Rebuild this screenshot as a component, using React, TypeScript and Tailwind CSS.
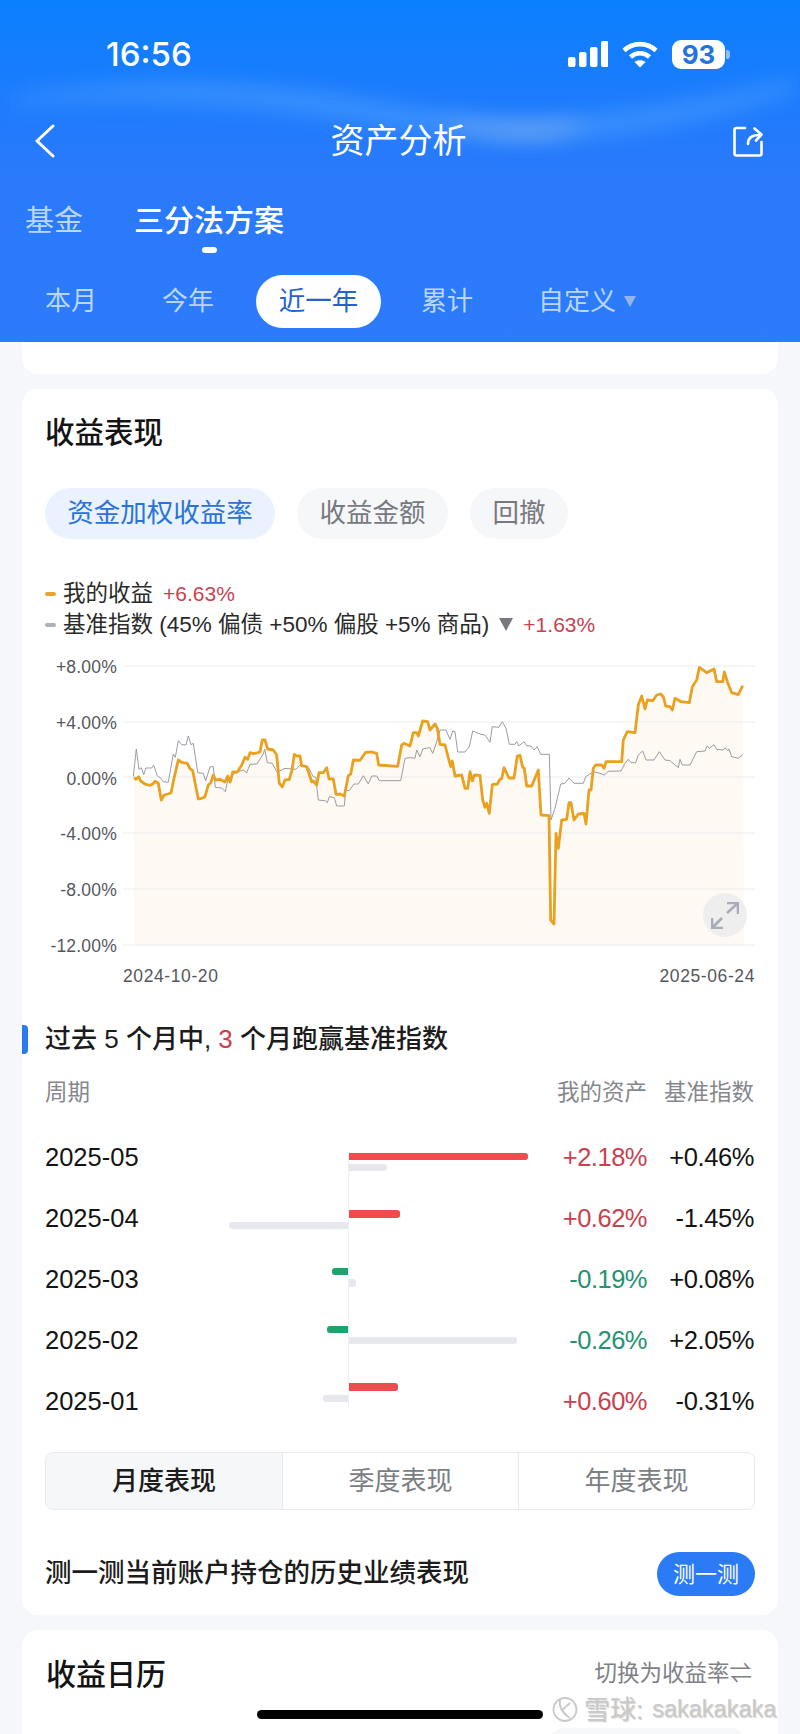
import React from 'react';

// chart points traced in two crops of the picture, turned into chart coordinates below
const orangeA = [[103,382],[108,388],[116,380],[122,393],[135,402],[150,406],[158,402],[165,394],[175,400],[184,450],[192,435],[205,432],[213,428],[222,385],[235,330],[245,337],[262,340],[270,356],[278,362],[295,447],[305,445],[315,440],[325,405],[332,398],[340,375],[347,390],[360,388],[375,396],[383,378],[390,396],[398,366],[412,366],[425,345],[435,322],[443,328],[450,308],[462,311],[480,306],[487,270],[495,270],[503,297],[520,300],[530,315],[538,400],[547,410],[555,390],[568,388],[576,360],[583,313],[590,318],[600,318],[605,347],[620,350],[635,395],[640,393],[650,405],[657,368],[670,368],[680,353],[687,387],[700,387],[708,433],[720,432],[733,438],[745,377],[752,372],[760,330],[780,331],[797,307],[815,306],[830,310],[836,345],[893,349],[905,285],[912,280],[930,288],[940,248],[950,248],[955,258],[968,213],[983,215]];
const orangeB = [[0,240],[15,222],[22,235],[30,283],[45,285],[62,350],[67,333],[75,378],[95,375],[105,415],[113,415],[120,365],[127,393],[133,375],[150,376],[158,450],[165,472],[170,460],[178,490],[187,404],[202,402],[210,388],[215,386],[222,353],[237,384],[252,384],[262,318],[270,316],[278,352],[283,355],[290,408],[305,408],[325,360],[333,495],[357,497],[362,810],[372,822],[378,550],[385,595],[395,510],[410,508],[417,458],[423,458],[432,510],[445,492],[462,490],[468,522],[477,420],[483,420],[490,355],[497,345],[515,345],[522,355],[528,335],[575,335],[580,270],[592,245],[615,248],[625,165],[635,138],[645,177],[652,150],[668,152],[680,135],[692,132],[700,140],[707,168],[720,170],[727,180],[735,145],[745,150],[752,155],[778,158],[787,110],[800,90],[808,52],[830,68],[852,57],[860,95],[878,95],[883,66],[893,98],[905,128],[925,134],[938,107]];
const greyA = [[100,380],[109,297],[117,358],[124,353],[131,374],[138,354],[155,354],[161,346],[172,378],[182,384],[190,395],[205,397],[220,312],[226,322],[235,272],[245,284],[258,285],[265,258],[273,284],[280,280],[293,368],[310,370],[317,393],[330,350],[340,350],[346,412],[365,414],[376,425],[385,382],[392,398],[400,372],[415,365],[430,360],[440,368],[450,343],[470,342],[490,312],[494,298],[502,338],[517,340],[530,365],[540,362],[555,355],[575,357],[588,358],[600,345],[625,352],[640,380],[647,382],[655,450],[675,452],[682,458],[688,440],[703,443],[710,468],[733,468],[737,420],[748,422],[762,402],[775,402],[790,377],[805,402],[815,378],[830,378],[838,392],[902,392],[915,325],[933,323],[945,325],[950,300],[960,320],[968,297],[988,293]];
const greyB = [[0,293],[8,310],[18,282],[30,240],[48,240],[60,268],[68,243],[75,245],[83,306],[105,306],[118,290],[128,243],[150,252],[165,255],[180,277],[187,230],[207,232],[217,215],[228,235],[238,283],[255,283],[260,275],[267,288],[282,275],[290,287],[303,288],[312,300],[322,290],[332,313],[358,313],[363,510],[375,475],[392,402],[405,400],[417,384],[432,400],[460,400],[467,380],[490,365],[510,370],[523,375],[535,364],[573,363],[585,340],[595,328],[603,338],[617,338],[625,315],[638,303],[648,330],[672,330],[688,305],[705,330],[720,332],[745,353],[750,328],[757,345],[780,345],[800,305],[825,303],[832,288],[838,295],[852,284],[860,298],[880,300],[885,293],[893,302],[897,297],[905,320],[925,325],[938,314]];

const toChart = (a: number[][], b: number[][]) =>
  [
    ...a.map(([x, y]) => [100 + x / 3 - 123, 650 + y / 3 - 656]),
    ...b.map(([x, y]) => [430 + x / 3 - 123, 650 + y / 3 - 656]),
  ].map(([x, y]) => `${x.toFixed(1)},${y.toFixed(1)}`);

const orangeLine = toChart(orangeA, orangeB);
const greyLine = toChart(greyA, greyB);

const yLabels = ['+8.00%', '+4.00%', '0.00%', '-4.00%', '-8.00%', '-12.00%'];
const gridY = [10, 66, 121, 177, 233, 289];

const months = [
  { date: '2025-05', mine: 2.18, bench: 0.46 },
  { date: '2025-04', mine: 0.62, bench: -1.45 },
  { date: '2025-03', mine: -0.19, bench: 0.08 },
  { date: '2025-02', mine: -0.26, bench: 2.05 },
  { date: '2025-01', mine: 0.6, bench: -0.31 },
];

const PX_PER_PCT = 82;
const fmt = (v: number) => `${v >= 0 ? '+' : ''}${v.toFixed(2)}%`;

const Bar = ({ value, colour, side }: { value: number; colour: string; side: 'left' | 'right' }) => {
  const show = side === 'left' ? value < 0 : value > 0;
  return (
    <div className={`flex h-[7.3px] ${side === 'left' ? 'justify-end' : 'justify-start'}`}>
      {show && (
        <div
          className={`h-full ${colour} ${side === 'left' ? 'rounded-l-[3px]' : 'rounded-r-[3px]'}`}
          style={{ width: Math.abs(value) * PX_PER_PCT }}
        />
      )}
    </div>
  );
};

const StatusIcons = () => (
  <div className="flex items-center">
    <svg width="40" height="26" viewBox="0 0 40 26" fill="white">
      <rect x="0" y="16" width="7.5" height="10" rx="2" />
      <rect x="11" y="11" width="7.5" height="15" rx="2" />
      <rect x="22" y="6" width="7.5" height="20" rx="2" />
      <rect x="33" y="0" width="7.5" height="26" rx="2" />
    </svg>
    <svg className="ml-[14px]" width="36" height="27" viewBox="0 0 36 27" fill="none" stroke="white" strokeWidth="4.6">
      <path d="M2 9.5C11 1 25 1 34 9.5" />
      <path d="M8.5 16C14 11 22 11 27.5 16" />
      <path d="M18 26.5L12.5 21C15.5 18.5 20.5 18.5 23.5 21Z" fill="white" stroke="none" />
    </svg>
    <div className="ml-[14px] flex items-center">
      <div className="flex h-[29px] w-[53px] items-center justify-center rounded-[9px] bg-white text-[26px] font-bold text-[#2474e0] [font-family:Inter,sans-serif]">
        93
      </div>
      <div className="ml-[1px] h-[9px] w-[4px] rounded-r-[3px] bg-[#8fbdf6]" />
    </div>
  </div>
);

const App = () => {
  return (
    <div className="relative h-[1734px] w-[800px] overflow-hidden bg-[#f5f7fa] [font-family:'Liberation_Sans','Noto_Sans_CJK_SC',sans-serif]">
      {/* blue header */}
      <div className="relative h-[342px] overflow-hidden bg-[linear-gradient(180deg,#0a80ff_0%,#1a7cfd_25%,#2a7afb_50%,#2b7bfb_100%)] text-white">
        <svg className="absolute inset-0" width="800" height="342" viewBox="0 0 800 342" fill="none">
          <defs>
            <filter id="waveBlur" x="-20%" y="-200%" width="140%" height="500%">
              <feGaussianBlur stdDeviation="11" />
            </filter>
          </defs>
          <path d="M10 100C100 80 250 82 350 100C430 113 490 125 540 122C620 118 720 100 795 80L795 90C720 115 620 135 540 138C470 140 400 125 330 114C240 100 110 94 10 105Z" fill="#4fa0ff" opacity="0.8" filter="url(#waveBlur)" />
          <path d="M430 118C470 124 520 130 590 122C560 138 500 142 430 118Z" fill="#c6cfdc" opacity="0.6" filter="url(#waveBlur)" />
        </svg>
        <div className="relative">
          <div className="flex h-[108px] items-center justify-between pl-[106px] pr-[70px]">
            <span className="text-[33px] font-medium leading-none [font-family:Inter,sans-serif]">16:56</span>
            <StatusIcons />
          </div>
          <div className="flex h-[66px] items-center justify-between pl-[34px] pr-[37px]">
            <div className="w-[30px]">
              <svg width="21" height="34" viewBox="0 0 21 34" fill="none" stroke="white" strokeWidth="3" strokeLinecap="round" strokeLinejoin="round">
                <path d="M19 2L3 17L19 32" />
              </svg>
            </div>
            <span className="text-[34px] leading-none">资产分析</span>
            <svg width="30" height="31" viewBox="0 0 30 31" fill="none" stroke="white" strokeWidth="2.6" strokeLinecap="round" strokeLinejoin="round">
              <path d="M12 2H3.5C2.2 2 1.5 2.8 1.5 4V27.5C1.5 28.7 2.2 29.5 3.5 29.5H26.5C27.8 29.5 28.5 28.7 28.5 27.5V16" />
              <path d="M15 18C15 12 18 9 26 9" />
              <path d="M21.5 2.5L28.5 8.5L23 14.5" />
            </svg>
          </div>
          <div className="flex items-start pl-[25px] pt-[24px]">
            <span className="h-[46px] text-[29px] leading-[46px] text-[#b9d6fd]">基金</span>
            <div className="ml-[51px] flex flex-col items-center">
              <span className="h-[46px] text-[30px] font-medium leading-[46px]">三分法方案</span>
              <div className="mt-[3px] h-[6px] w-[15px] rounded-full bg-white" />
            </div>
          </div>
          <div className="mt-[22px] flex h-[53px] items-center pl-[45px] text-[26px] text-[#bad6fd]">
            <span>本月</span>
            <span className="ml-[65px]">今年</span>
            <span className="ml-[42px] flex h-[53px] w-[125px] items-center justify-center rounded-full bg-white text-[26.5px] text-[#2464c8]">近一年</span>
            <span className="ml-[40px]">累计</span>
            <span className="ml-[65px]">自定义</span>
            <span className="ml-[8px] h-0 w-0 border-x-[6px] border-t-[11px] border-x-transparent border-t-[#94b5ec]" />
          </div>
        </div>
      </div>

      <div className="mx-[22px] h-[32px] rounded-b-[16px] bg-white" />

      {/* 收益表现 */}
      <div className="mx-[22px] mt-[15px] rounded-[16px] bg-white px-[23px] pb-[19px] pt-[24px]">
        <h2 className="text-[29.5px] font-medium leading-[40px] text-[#141414]">收益表现</h2>

        <div className="mt-[35px] flex gap-[22px] text-[26.5px]">
          <span className="flex h-[51px] w-[230px] items-center justify-center rounded-full bg-[#e9f2fe] pt-[1px] text-[#2a72d8]">资金加权收益率</span>
          <span className="flex h-[51px] w-[151px] items-center justify-center rounded-full bg-[#f6f7f9] pt-[1px] text-[#77797e]">收益金额</span>
          <span className="flex h-[51px] w-[98px] items-center justify-center rounded-full bg-[#f6f7f9] pt-[1px] text-[#77797e]">回撤</span>
        </div>

        <div className="mt-[39px] text-[22.5px] text-[#2a2a2a]">
          <div className="flex h-[31px] items-center">
            <span className="h-[4px] w-[11px] rounded-full bg-[#e3a72f]" />
            <span className="ml-[7px]">我的收益</span>
            <span className="ml-[10px] text-[21px] text-[#c84250]">+6.63%</span>
          </div>
          <div className="flex h-[31px] items-center whitespace-pre">
            <span className="h-[4px] w-[11px] rounded-full bg-[#adb0b6]" />
            <span className="ml-[7px]">基准指数 (45% 偏债 +50% 偏股 +5% 商品)</span>
            <span className="ml-[10px] h-0 w-0 border-x-[7px] border-t-[13px] border-x-transparent border-t-[#77797e]" />
            <span className="ml-[10px] text-[21px] text-[#c84250]">+1.63%</span>
          </div>
        </div>

        {/* chart */}
        <div className="mt-[16px] flex h-[299px]">
          <div className="flex w-[72px] translate-y-[1px] flex-col justify-between text-right text-[17.5px] leading-[20px] tracking-[0.2px] text-[#55575c]">
            {yLabels.map((l) => (
              <span key={l}>{l}</span>
            ))}
          </div>
          <div className="relative ml-[6px]">
            <svg width="632" height="299" viewBox="0 0 632 299" fill="none">
              <polygon points={`11,289 ${orangeLine.join(' ')} 621,289`} fill="#fef9f2" />
              {gridY.map((y) => (
                <line key={y} x1="0" x2="632" y1={y} y2={y} stroke="#ececec" strokeWidth="1" />
              ))}
              <polyline points={greyLine.join(' ')} stroke="#9a9ca3" strokeWidth="1" strokeLinejoin="round" />
              <polyline points={orangeLine.join(' ')} stroke="#e9a11f" strokeWidth="2.8" strokeLinejoin="round" />
            </svg>
            <div className="absolute left-[580px] top-[237px] flex h-[44px] w-[44px] items-center justify-center rounded-full bg-[#eeeeee]">
              <svg width="28" height="27" viewBox="0 0 28 27" fill="none" stroke="#a9abb8" strokeWidth="2.6">
                <path d="M1 26L11 16" />
                <path d="M1 16V26H12" />
                <path d="M27 1L16 11" />
                <path d="M16 1H27V12" />
              </svg>
            </div>
          </div>
        </div>
        <div className="mt-[9px] flex h-[24px] items-center justify-between pl-[78px] text-[17.5px] tracking-[0.6px] text-[#55575c]">
          <span>2024-10-20</span>
          <span>2025-06-24</span>
        </div>

        {/* 跑赢基准 */}
        <div className="-ml-[23px] mt-[33px] flex h-[36px] items-center">
          <div className="h-[29px] w-[6px] rounded-r-[4px] bg-[#2a7bf0]" />
          <div className="ml-[17px] whitespace-pre text-[26px] font-medium text-[#1c1c1c]">
            过去 5 个月中, <span className="text-[#c84250]">3</span> 个月跑赢基准指数
          </div>
        </div>
        <div className="mt-[21px] flex h-[30px] items-center text-[22.5px] text-[#85878c]">
          <span className="w-[501px]">周期</span>
          <span className="w-[101px] text-right">我的资产</span>
          <span className="w-[107px] text-right">基准指数</span>
        </div>

        <div className="mt-[19px] flex text-[25.5px] leading-[61px]">
          <div className="w-[183px] text-[#141414]">
            {months.map((m) => (
              <div key={m.date} className="h-[61px]">{m.date}</div>
            ))}
          </div>
          <div className="w-[300px] pt-[25.7px]">
            {months.map((m) => (
              <div key={m.date} className="flex h-[57.65px] last:h-[26px]">
                <div className="flex w-[120px] flex-col gap-[4px]">
                  <Bar value={m.mine} side="left" colour="bg-[#20a26c]" />
                  <Bar value={m.bench} side="left" colour="bg-[#e6e8ee]" />
                </div>
                <div className="flex w-[180px] flex-col gap-[4px] border-l border-[#eef0f3]">
                  <Bar value={m.mine} side="right" colour="bg-[#ee4c4f]" />
                  <Bar value={m.bench} side="right" colour="bg-[#e6e8ee]" />
                </div>
              </div>
            ))}
          </div>
          <div className="w-[119px] text-right tracking-[-0.5px]">
            {months.map((m) => (
              <div key={m.date} className={`h-[61px] ${m.mine >= 0 ? 'text-[#c84250]' : 'text-[#26926f]'}`}>{fmt(m.mine)}</div>
            ))}
          </div>
          <div className="w-[107px] text-right tracking-[-0.4px] text-[#141414]">
            {months.map((m) => (
              <div key={m.date} className="h-[61px]">{fmt(m.bench)}</div>
            ))}
          </div>
        </div>

        {/* 表现周期切换 */}
        <div className="mt-[20px] flex h-[58px] overflow-hidden rounded-[8px] border border-[#e8eaee] text-[26px] text-[#7c7e83]">
          <div className="flex w-[237px] items-center justify-center border-r border-[#e8eaee] bg-[#f6f7f9] font-medium text-[#1c1c1c]">月度表现</div>
          <div className="flex w-[236px] items-center justify-center border-r border-[#e8eaee]">季度表现</div>
          <div className="flex flex-1 items-center justify-center">年度表现</div>
        </div>

        <div className="mt-[42px] flex h-[44px] items-center justify-between">
          <span className="text-[26.5px] font-medium text-[#1c1c1c]">测一测当前账户持仓的历史业绩表现</span>
          <span className="flex h-[44px] w-[98px] items-center justify-center rounded-full bg-[#2a7bf5] text-[22px] text-white">测一测</span>
        </div>
      </div>

      {/* 收益日历 */}
      <div className="mx-[22px] mt-[15px] h-[200px] rounded-[16px] bg-white pl-[24px] pr-[26px] pt-[24px]">
        <div className="flex h-[40px] items-center justify-between">
          <h2 className="text-[30px] font-medium text-[#141414]">收益日历</h2>
          <span className="text-[22.5px] text-[#7f8186]">切换为收益率⇌</span>
        </div>
        <div className="ml-[504px] mt-[34px] h-[30px] w-[195px] rounded-[14px] bg-[#f7f8fa]" />
      </div>

      {/* home indicator */}
      <div className="absolute left-[257px] top-[1710px] h-[9px] w-[286px] rounded-full bg-black" />

      {/* watermark */}
      <div className="absolute left-[552px] top-[1696px] flex h-[27px] items-center text-[#c9c9c9] [text-shadow:1px_1px_1px_rgba(120,120,120,0.35)]">
        <svg width="26" height="27" viewBox="0 0 26 27" fill="none" stroke="#c9c9c9" strokeWidth="1.8">
          <circle cx="13" cy="13.5" r="11.5" />
          <path d="M8 4C7 10 10 17 18 22" />
          <path d="M18 7L10 14L15 20" />
        </svg>
        <span className="ml-[6px] text-[26px] leading-none">雪球:</span>
        <span className="ml-[9px] text-[23.5px] leading-none">sakakakaka</span>
      </div>
    </div>
  );
};

export default App;
